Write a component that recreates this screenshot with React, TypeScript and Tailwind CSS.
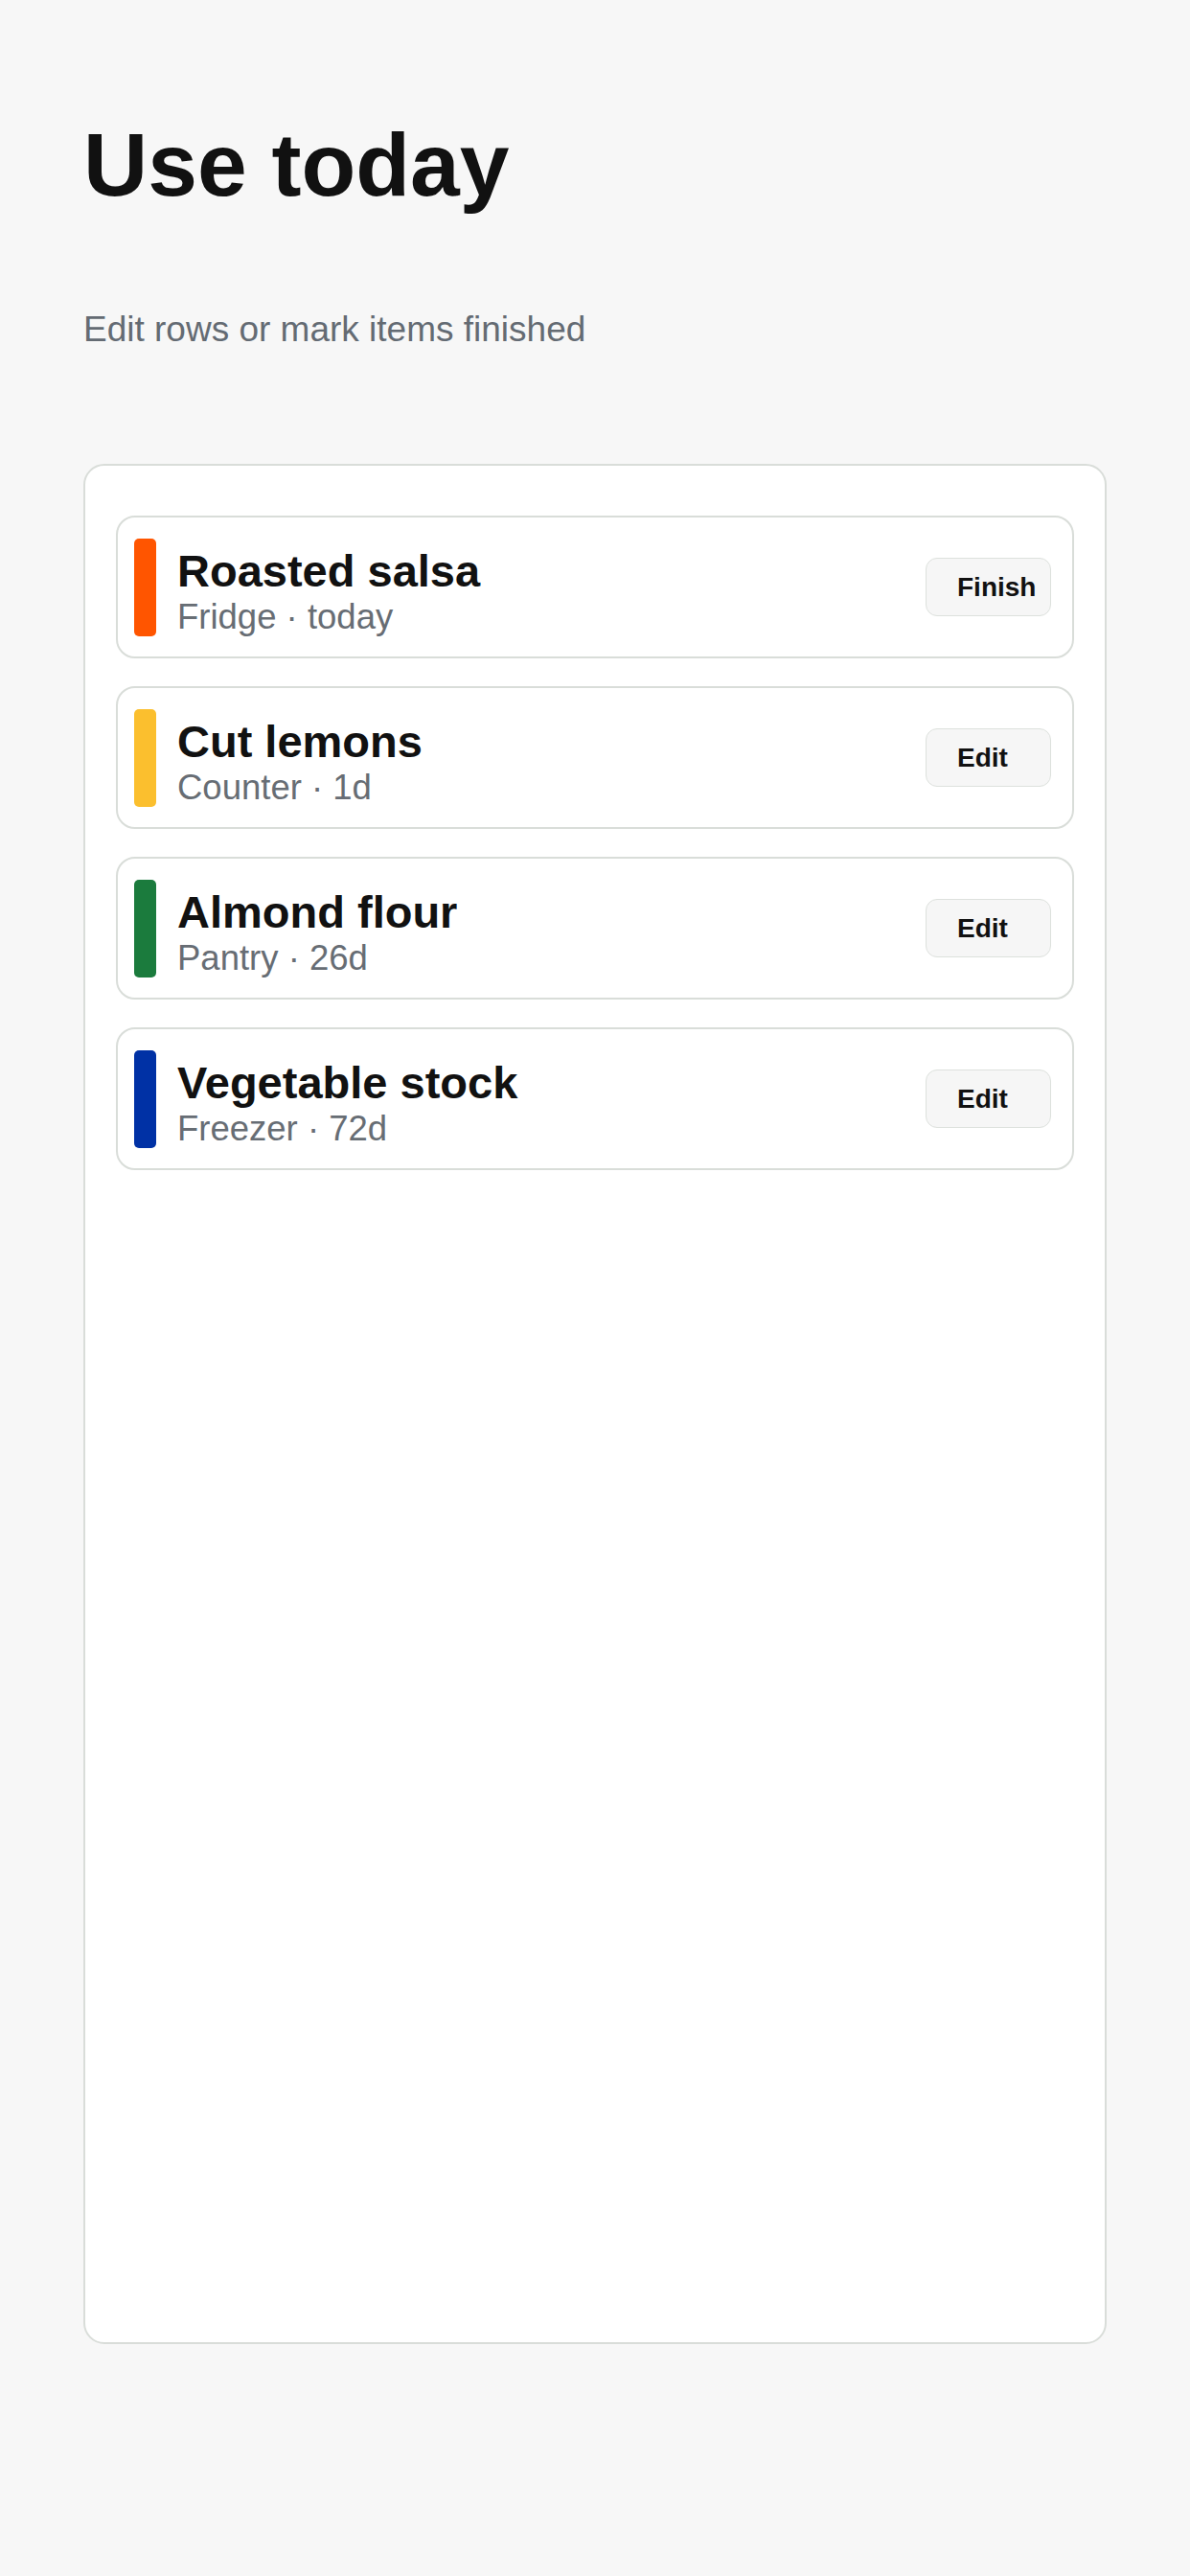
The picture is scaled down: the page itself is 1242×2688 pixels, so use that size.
import React from 'react';

type Item = {
  name: string;
  place: string;
  when: string;
  color: string;
  action: string;
};

const items: Item[] = [
  { name: 'Roasted salsa', place: 'Fridge', when: 'today', color: 'bg-[#ff5500]', action: 'Finish' },
  { name: 'Cut lemons', place: 'Counter', when: '1d', color: 'bg-[#fbbf2e]', action: 'Edit' },
  { name: 'Almond flour', place: 'Pantry', when: '26d', color: 'bg-[#1b7b3d]', action: 'Edit' },
  { name: 'Vegetable stock', place: 'Freezer', when: '72d', color: 'bg-[#0031a5]', action: 'Edit' },
];

function ItemRow({ item }: { item: Item }) {
  return (
    <div className="flex h-[149px] items-center rounded-[20px] border-2 border-[#d9ddd9] bg-white pl-[17px] pr-[22px]">
      {/* Status bar */}
      <div className={`h-[102px] w-[23px] shrink-0 rounded-[5px] ${item.color}`} />

      {/* Text */}
      <div className="ml-[22px] mt-[7px] flex min-w-0 flex-1 flex-col">
        <span className="text-[47px] font-bold leading-[55px] text-[#111111]">{item.name}</span>
        <span className="text-[36.5px] leading-[41px] text-[#676d74]">
          {item.place} · {item.when}
        </span>
      </div>

      {/* Action */}
      <button
        type="button"
        className="flex h-[61px] w-[131px] shrink-0 items-center overflow-visible whitespace-nowrap rounded-[12px] border border-[#dde1dd] bg-[#f6f6f6] pl-[32px] text-[28px] font-bold text-[#111111]"
      >
        {item.action}
      </button>
    </div>
  );
}

export default function App() {
  return (
    <div
      className="min-h-[2688px] w-full bg-[#f7f7f7] px-[87px] pt-[126px]"
      style={{ fontFamily: '"Liberation Sans", Arial, sans-serif' }}
    >
      <h1 className="text-[93px] font-bold leading-none text-[#111111]">Use today</h1>
      <p className="mt-[104px] text-[37px] leading-[41px] text-[#646b73]">Edit rows or mark items finished</p>

      <div className="mt-[120px] h-[1962px] rounded-[22px] border-2 border-[#d9ddd9] bg-white px-[32px] pt-[52px]">
        <div className="flex flex-col gap-[29px]">
          {items.map((item) => (
            <ItemRow key={item.name} item={item} />
          ))}
        </div>
      </div>
    </div>
  );
}
